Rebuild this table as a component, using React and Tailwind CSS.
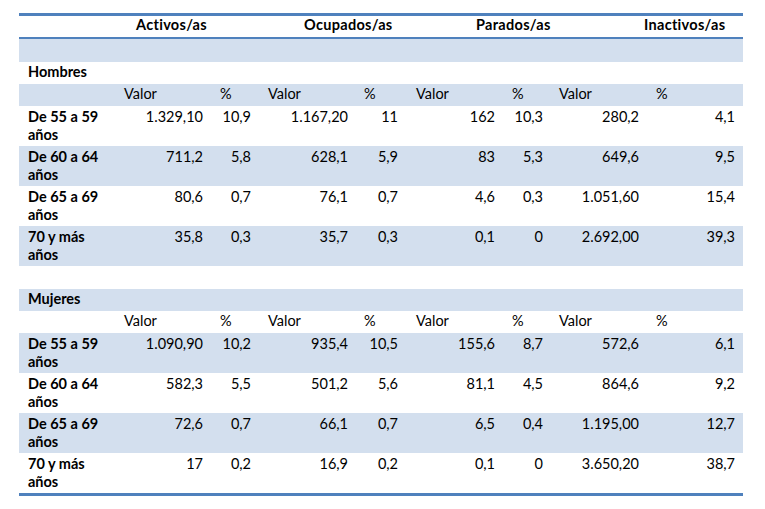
import React from 'react';

const LIGHT = 'bg-[#d3dfee]';

// column widths: label | (valor, %) x 4
const GRID = 'grid grid-cols-[98px_95px_46px_99px_47px_99px_47px_98px_95px]';

// left padding for "Valor" / "%" sub-headers, right padding for numbers
const headPad = ['pl-[7px]', 'pl-[8px]', 'pl-[10px]', 'pl-[7px]', 'pl-[12px]', 'pl-[9px]', 'pl-[9px]', 'pl-[8px]'];
const valPad = ['pr-[9px]', 'pr-[7px]', 'pr-[9px]', 'pr-[6px]', 'pr-[8px]', 'pr-[7px]', 'pr-[9px]', 'pr-[8px]'];

const sections = [
  {
    name: 'Hombres',
    nameBg: 'bg-white',
    subBg: LIGHT,
    shadeOdd: false,
    rows: [
      ['De 55 a 59', ['1.329,10', '10,9', '1.167,20', '11', '162', '10,3', '280,2', '4,1']],
      ['De 60 a 64', ['711,2', '5,8', '628,1', '5,9', '83', '5,3', '649,6', '9,5']],
      ['De 65 a 69', ['80,6', '0,7', '76,1', '0,7', '4,6', '0,3', '1.051,60', '15,4']],
      ['70 y más', ['35,8', '0,3', '35,7', '0,3', '0,1', '0', '2.692,00', '39,3']],
    ],
  },
  {
    name: 'Mujeres',
    nameBg: LIGHT,
    subBg: 'bg-white',
    shadeOdd: true,
    rows: [
      ['De 55 a 59', ['1.090,90', '10,2', '935,4', '10,5', '155,6', '8,7', '572,6', '6,1']],
      ['De 60 a 64', ['582,3', '5,5', '501,2', '5,6', '81,1', '4,5', '864,6', '9,2']],
      ['De 65 a 69', ['72,6', '0,7', '66,1', '0,7', '6,5', '0,4', '1.195,00', '12,7']],
      ['70 y más', ['17', '0,2', '16,9', '0,2', '0,1', '0', '3.650,20', '38,7']],
    ],
  },
];

const Section = ({ section }) => (
  <>
    {/* group title */}
    <div className={`${GRID} h-[22px] pt-[1px] ${section.nameBg}`}>
      <div className="pl-[9px] font-bold col-span-9">{section.name}</div>
    </div>

    {/* Valor / % sub-header */}
    <div className={`${GRID} h-[22px] pt-[1px] ${section.subBg}`}>
      <div />
      {headPad.map((p, i) => (
        <div key={i} className={p}>{i % 2 === 0 ? 'Valor' : '%'}</div>
      ))}
    </div>

    {/* data */}
    {section.rows.map(([label, vals], r) => {
      const shaded = section.shadeOdd ? r % 2 === 0 : r % 2 === 1;
      return (
        <div key={label} className={`${GRID} h-[40px] pt-[2px] ${shaded ? LIGHT : 'bg-white'}`}>
          <div className="pl-[9px] font-bold">
            <div>{label}</div>
            <div>años</div>
          </div>
          {vals.map((v, i) => (
            <div key={i} className={`text-right ${valPad[i]}`}>{v}</div>
          ))}
        </div>
      );
    })}
  </>
);

export default function App() {
  return (
    <div className="w-[765px] h-[509px] bg-white pt-[13px] pl-[19px] font-['Lato',sans-serif] text-[14.5px] leading-[18px] text-black">
      <div className="w-[724px] border-t-[3px] border-b-[3px] border-[#4f81bd]">
        {/* column groups */}
        <div className={`${GRID} h-[23px] font-bold tracking-[0.3px] border-b-2 border-[#4f81bd]`}>
          <div />
          <div className="col-span-2 pl-[19px] whitespace-nowrap">Activos/as</div>
          <div className="col-span-2 pl-[46px] whitespace-nowrap">Ocupados/as</div>
          <div className="col-span-2 pl-[72px] whitespace-nowrap">Parados/as</div>
          <div className="col-span-2 pl-[94px] whitespace-nowrap">Inactivos/as</div>
        </div>

        <div className={`h-[23px] ${LIGHT}`} />

        <Section section={sections[0]} />

        <div className="h-[23px] bg-white" />

        <Section section={sections[1]} />
      </div>
    </div>
  );
}
